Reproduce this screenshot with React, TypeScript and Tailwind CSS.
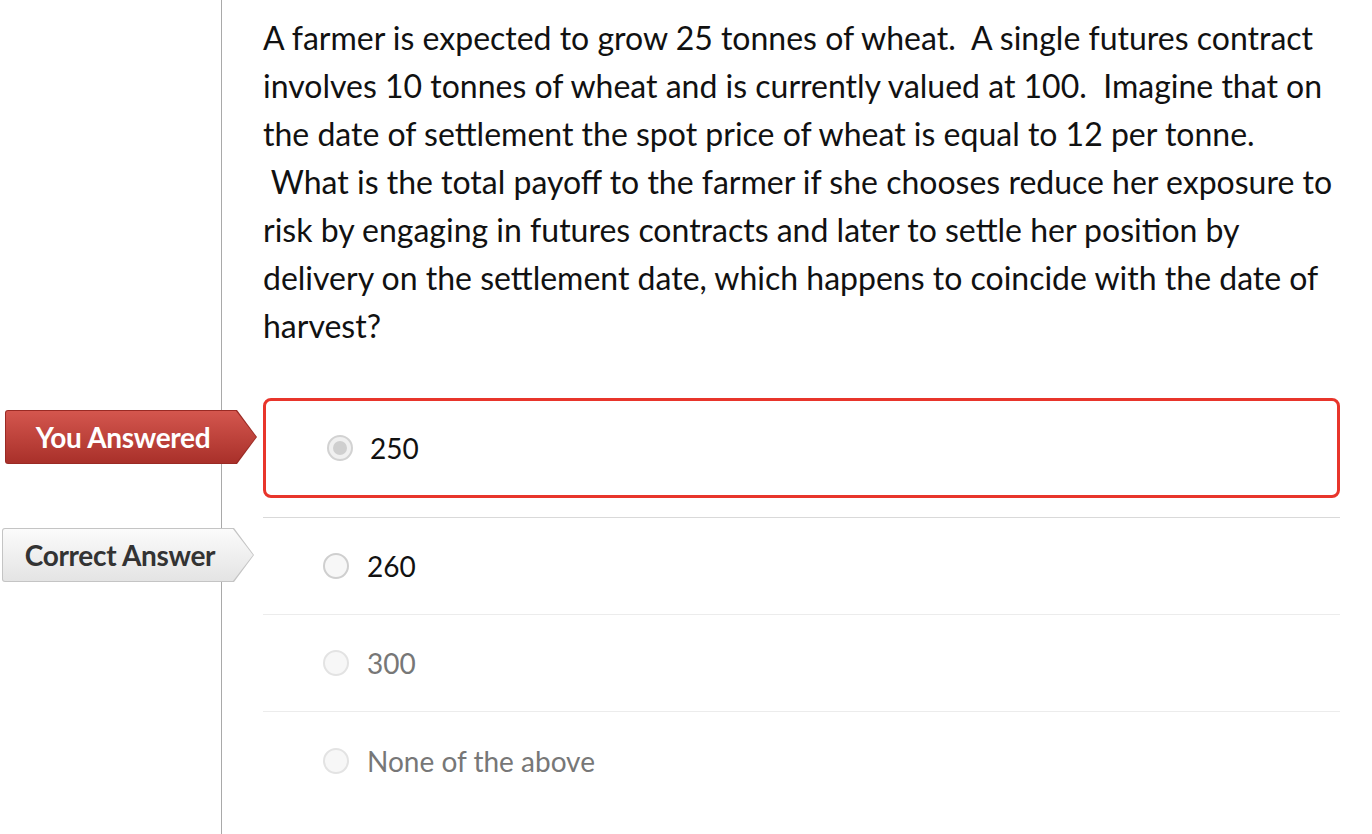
import React from 'react';

type Opt = { text: string; state: 'chosen' | 'normal' | 'muted' };

const options: Opt[] = [
  { text: '250', state: 'chosen' },
  { text: '260', state: 'normal' },
  { text: '300', state: 'muted' },
  { text: 'None of the above', state: 'muted' },
];

function Tag({ label, variant }: { label: string; variant: 'red' | 'gray' }) {
  const shape =
    '[clip-path:polygon(0_0,calc(100%-20px)_0,100%_50%,calc(100%-20px)_100%,0_100%)]';
  const outer = variant === 'red' ? 'bg-[#9a2a24]' : 'bg-[#c4c4c4]';
  const inner =
    variant === 'red'
      ? 'bg-gradient-to-b from-[#d4564e] to-[#a9302a] text-white'
      : 'bg-gradient-to-b from-[#fbfbfb] to-[#e4e4e4] text-[#333]';
  return (
    <div className={`${shape} ${outer} h-[54px] w-[252px] p-px rounded-l-[3px]`}>
      <div
        className={`${shape} ${inner} h-full w-full rounded-l-[2px] flex items-center justify-center pr-[16px] text-[28px] font-bold tracking-[-0.3px]`}
      >
        {label}
      </div>
    </div>
  );
}

function Radio({ state }: { state: Opt['state'] }) {
  if (state === 'chosen') {
    return (
      <span className="w-[26px] h-[26px] rounded-full border-2 border-[#d2d2d2] bg-[#f0f0f0] flex items-center justify-center shrink-0">
        <span className="w-[14px] h-[14px] rounded-full bg-[#cfcfcf]" />
      </span>
    );
  }
  const ring = state === 'normal' ? 'border-[#cfcfcf]' : 'border-[#e3e3e3]';
  return <span className={`w-[26px] h-[26px] rounded-full border-2 ${ring} bg-[#f7f7f7] shrink-0`} />;
}

export default function App() {
  return (
    <div className="min-h-screen bg-white flex font-['Lato','Liberation_Sans',sans-serif]">
      <div className="w-[222px] shrink-0 border-r border-[#a9a9a9]" />
      <div className="flex-1 pl-[41px] pr-[32px] pt-[14px]">
        <p className="text-[32px] leading-[48px] text-[#111]">
          A farmer is expected to grow 25 tonnes of wheat. {'\u00a0'}A single futures contract involves 10 tonnes of
          wheat and is currently valued at 100. {'\u00a0'}Imagine that on the date of settlement the spot price of
          wheat is equal to 12 per tonne. {'\u00a0'}What is the total payoff to the farmer if she chooses reduce her
          exposure to risk by engaging in futures contracts and later to settle her position by delivery on the
          settlement date, which happens to coincide with the date of harvest?
        </p>

        <div className="mt-[48px]">
          {options.map((o, i) => {
            const textColor = o.state === 'muted' ? 'text-[#777]' : 'text-[#111]';
            if (o.state === 'chosen') {
              return (
                <div key={i} className="relative pb-[19px] border-b border-[#d9d9d9]">
                  <div className="absolute left-[-258px] top-[12px]">
                    <Tag label="You Answered" variant="red" />
                  </div>
                  <div className="h-[100px] border-[3px] border-[#e8352b] rounded-[8px] flex items-center pl-[61px] gap-[17px]">
                    <Radio state={o.state} />
                    <span className={`text-[28px] ${textColor}`}>{o.text}</span>
                  </div>
                </div>
              );
            }
            return (
              <div
                key={i}
                className={`relative h-[97px] flex items-center pl-[60px] gap-[18px] ${
                  i < options.length - 1 ? 'border-b border-[#ececec]' : ''
                }`}
              >
                {i === 1 && (
                  <div className="absolute left-[-261px] top-[10px]">
                    <Tag label="Correct Answer" variant="gray" />
                  </div>
                )}
                <Radio state={o.state} />
                <span className={`text-[28px] ${textColor}`}>{o.text}</span>
              </div>
            );
          })}
        </div>
      </div>
    </div>
  );
}
